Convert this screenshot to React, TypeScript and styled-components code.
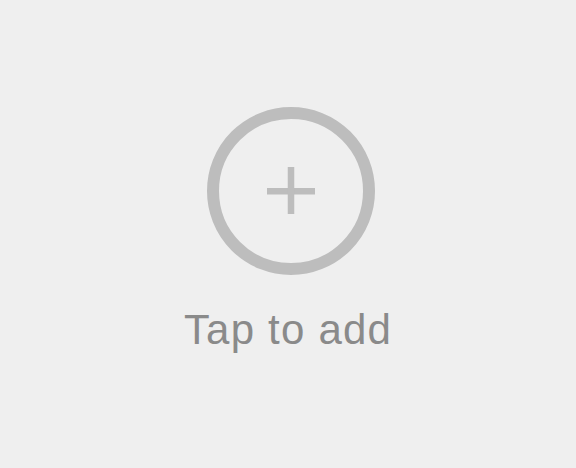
import React from 'react';
import styled, { createGlobalStyle } from 'styled-components';

const GlobalStyle = createGlobalStyle`
  html, body {
    margin: 0;
    padding: 0;
    background: #efefef;
  }
`;

const Screen = styled.div`
  height: 468px;
  display: flex;
  flex-direction: column;
  align-items: center;
  padding-top: 107px;
  box-sizing: border-box;
  font-family: 'Liberation Sans', Arial, sans-serif;
`;

const AddButton = styled.button`
  width: 168px;
  height: 168px;
  margin-left: 6px;
  padding: 0;
  border: 12px solid #bdbdbd;
  border-radius: 50%;
  background: transparent;
  display: flex;
  align-items: center;
  justify-content: center;
  box-sizing: border-box;
  cursor: pointer;
`;

const Caption = styled.div`
  margin-top: 30px;
  font-size: 42px;
  line-height: 50px;
  color: #8a8a8a;
  letter-spacing: 1.2px;
`;

const PlusIcon = () => (
  <svg width="48" height="48" viewBox="0 0 48 48">
    <rect x="0" y="21" width="48" height="6.5" fill="#bdbdbd" />
    <rect x="20.75" y="0" width="6.5" height="47" fill="#bdbdbd" />
  </svg>
);

const App: React.FC = () => (
  <>
    <GlobalStyle />
    <Screen>
      <AddButton aria-label='Add'>
        <PlusIcon />
      </AddButton>
      <Caption>Tap to add</Caption>
    </Screen>
  </>
);

export default App;
